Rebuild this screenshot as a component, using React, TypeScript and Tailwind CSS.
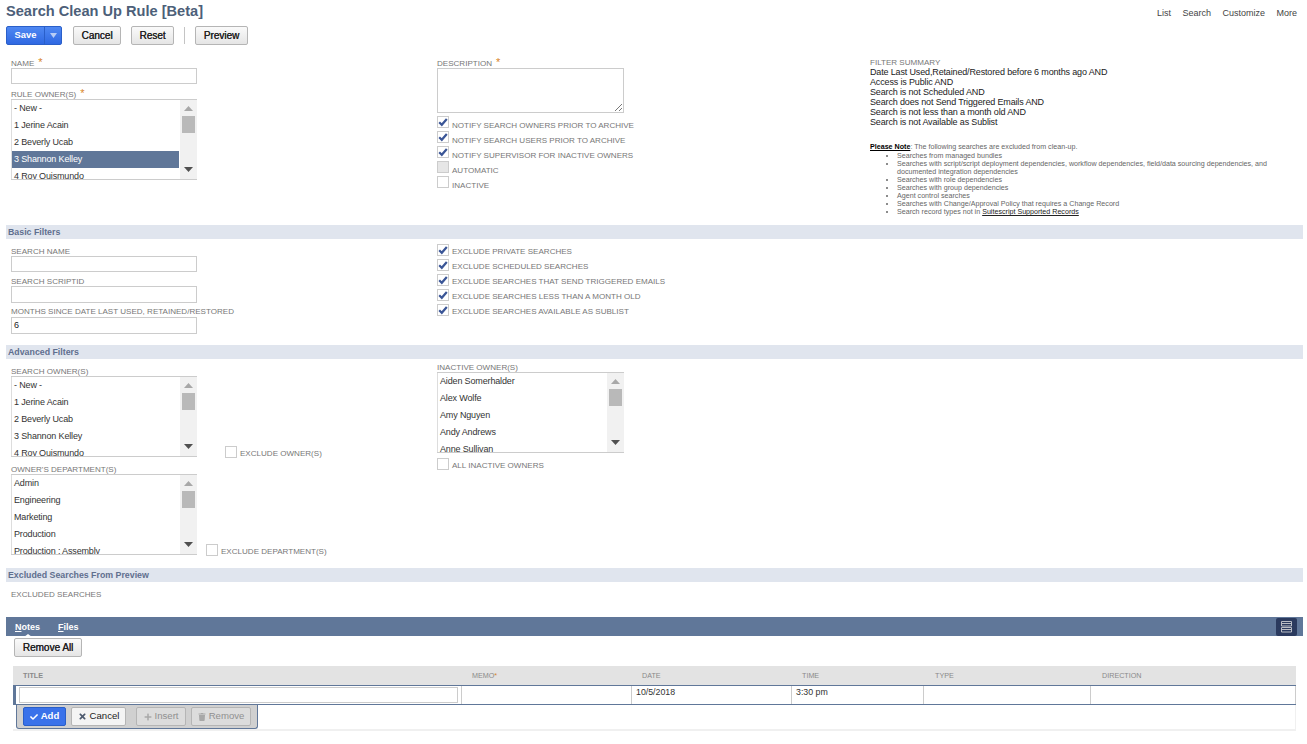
import { FaCheck, FaPlus, FaTimes, FaTrash } from "react-icons/fa";

const owners = ["- New -", "1 Jerine Acain", "2 Beverly Ucab", "3 Shannon Kelley", "4 Roy Quismundo"];
const inactiveOwners = ["Aiden Somerhalder", "Alex Wolfe", "Amy Nguyen", "Andy Andrews", "Anne Sullivan"];
const departments = ["Admin", "Engineering", "Marketing", "Production", "Production : Assembly"];

const summary = [
  "Date Last Used,Retained/Restored before 6 months ago AND",
  "Access is Public AND",
  "Search is not Scheduled AND",
  "Search does not Send Triggered Emails AND",
  "Search is not less than a month old AND",
  "Search is not Available as Sublist",
];

function Label({ text, required, high }: { text: string; required?: boolean; high?: boolean }) {
  return (
    <div className={`h-[10px] whitespace-nowrap text-[8.05px] text-[#777] ${high ? "leading-[10px]" : "leading-[12px]"}`}>
      {text}
      {required && <span className="ml-[4px] text-[11px] text-[#d9852b]">*</span>}
    </div>
  );
}

function TextInput({ value, className }: { value?: string; className: string }) {
  return (
    <div className={`w-[186px] border border-[#cccccc] bg-white px-[2px] text-[9px] leading-[14px] text-[#222] ${className}`}>
      {value}
    </div>
  );
}

function ListBox({ items, selected, width = "w-[186px]" }: { items: string[]; selected?: number; width?: string }) {
  return (
    <div className={`flex h-[81px] shrink-0 overflow-hidden border-y border-[#cccccc] bg-white ${width}`}>
      <div className="min-w-0 flex-1 border-l border-[#dddddd]">
        {items.map((item, i) => (
          <div
            key={item}
            className={`h-[17px] whitespace-nowrap pl-[2px] pr-1 text-[9px] leading-[16px] tracking-[-0.15px] ${
              i === selected ? "mr-[1px] bg-[#607799] text-white" : "text-[#333]"
            }`}
          >
            {item}
          </div>
        ))}
      </div>
      <div className="flex w-[17px] shrink-0 flex-col items-center bg-[#f1f1f1]">
        <svg width="9" height="5" viewBox="0 0 9 5" className="mt-[6px] shrink-0">
          <path d="M4.5 0 9 5H0z" fill="#a8a8a8" />
        </svg>
        <div className="mt-[5px] h-[17px] w-[13px] shrink-0 bg-[#b9b9b9]" />
        <svg width="9" height="5" viewBox="0 0 9 5" className="mt-[34px] shrink-0">
          <path d="M0 0h9L4.5 5z" fill="#505050" />
        </svg>
      </div>
    </div>
  );
}

function CheckRow({ label, checked, grey, tight }: { label: string; checked?: boolean; grey?: boolean; tight?: boolean }) {
  return (
    <div className="flex h-[15px] items-start">
      <div className={`flex h-[12px] w-[12px] shrink-0 items-center justify-center border border-[#cccccc] ${grey ? "bg-[#e6e6e6]" : "bg-white"}`}>
        {checked && (
          <svg width="10" height="9" viewBox="0 0 10 9">
            <path d="M1.2 4.2 3.8 6.8 8.8 1" fill="none" stroke="#3a5596" strokeWidth="2.2" />
          </svg>
        )}
      </div>
      <div className={`ml-[3px] h-[10px] whitespace-nowrap text-[8.05px] leading-[10px] text-[#777] ${tight ? "mt-[3px]" : "mt-[5px]"}`}>{label}</div>
    </div>
  );
}

function SectionBar({ title }: { title: string }) {
  return <div className="h-[14px] bg-[#e0e5ee] pl-[2px] text-[8.8px] font-bold leading-[14px] text-[#5f6f8e]">{title}</div>;
}

function GreyButton({ text, className }: { text: string; className: string }) {
  return (
    <div
      className={`flex h-[19px] items-center justify-center rounded-[2px] border border-[#b5b5b5] bg-gradient-to-b from-[#fafafa] to-[#e5e5e5] text-[10px] text-[#222] [text-shadow:0.3px_0_0_#222] ${className}`}
    >
      {text}
    </div>
  );
}

function BarButton({ icon, text, className }: { icon: React.ReactNode; text: string; className: string }) {
  return (
    <div className={`flex h-[19px] items-center justify-center gap-[3px] rounded-[2px] border text-[9.6px] ${className}`}>
      {icon}
      {text}
    </div>
  );
}

export default function App() {
  return (
    <div className="h-[744px] w-[1307px] overflow-hidden bg-white pl-[6px] pr-[4px] font-['Liberation_Sans',Arial,sans-serif]">
      {/* Title */}
      <div className="flex h-[26px] items-start justify-between">
        <h1 className="mt-[3px] text-[14.6px] font-bold leading-[17px] text-[#4d5f79]">Search Clean Up Rule [Beta]</h1>
        <div className="mr-[6px] mt-[8px] flex gap-[11.5px] text-[9px] leading-[10px] text-[#444]">
          <span>List</span>
          <span>Search</span>
          <span>Customize</span>
          <span>More</span>
        </div>
      </div>

      {/* Buttons */}
      <div className="flex h-[19px] items-center">
        <div className="flex h-[19px] w-[56px] overflow-hidden rounded-[2px] border border-[#2a5fc9] bg-gradient-to-b from-[#4f88f2] to-[#2f68e2] text-[9.4px] font-bold text-white">
          <div className="flex w-[38px] items-center justify-center border-r border-[#2a5fc9]">Save</div>
          <div className="flex flex-1 items-center justify-center">
            <svg width="7" height="5" viewBox="0 0 7 5">
              <path d="M0 0h7L3.5 5z" fill="#b8cdf5" />
            </svg>
          </div>
        </div>
        <GreyButton text="Cancel" className="ml-[11px] w-[48px]" />
        <GreyButton text="Reset" className="ml-[10px] w-[43px]" />
        <div className="ml-[10px] h-[17px] w-px bg-[#c4c4c4]" />
        <GreyButton text="Preview" className="ml-[10px] w-[53px]" />
      </div>

      {/* Main fields */}
      <div className="flex h-[180px] pl-[5px] pt-[12px]">
        <div className="w-[426px]">
          <Label text="NAME" required high />
          <TextInput className="mt-[1px] h-[16px]" />
          <div className="mb-[1px] mt-[4px]">
            <Label text="RULE OWNER(S)" required high />
          </div>
          <ListBox items={owners} selected={3} />
        </div>
        <div className="w-[433px]">
          <Label text="DESCRIPTION" required high />
          <div className="relative mt-[1px] h-[45px] w-[187px] border border-[#cccccc] bg-white">
            <svg width="9" height="9" viewBox="0 0 9 9" className="absolute bottom-0 right-0">
              <path d="M1 8 8 1M5 8 8 5" stroke="#555" strokeWidth="0.8" />
            </svg>
          </div>
          <div className="mt-[3px]">
            <CheckRow label="NOTIFY SEARCH OWNERS PRIOR TO ARCHIVE" checked />
            <CheckRow label="NOTIFY SEARCH USERS PRIOR TO ARCHIVE" checked />
            <CheckRow label="NOTIFY SUPERVISOR FOR INACTIVE OWNERS" checked />
            <CheckRow label="AUTOMATIC" grey />
            <CheckRow label="INACTIVE" />
          </div>
        </div>
        <div className="flex-1">
          <Label text="FILTER SUMMARY" />
          <div className="text-[9px] leading-[10px] tracking-[-0.15px] text-[#222]">
            {summary.map((line) => (
              <div key={line}>{line}</div>
            ))}
          </div>
          <div className="mt-[16px] text-[7.13px] leading-[8px] text-[#666]">
            <span className="font-bold text-black underline">Please Note</span>: The following searches are excluded from clean-up.
          </div>
          <ul className="mt-[1px] w-[405px] list-disc pl-[27px] text-[7.13px] leading-[8px] text-[#666]">
            <li>Searches from managed bundles</li>
            <li>Searches with script/script deployment dependencies, workflow dependencies, field/data sourcing dependencies, and documented integration dependencies</li>
            <li>Searches with role dependencies</li>
            <li>Searches with group dependencies</li>
            <li>Agent control searches</li>
            <li>Searches with Change/Approval Policy that requires a Change Record</li>
            <li>
              Search record types not in <span className="text-[#222] underline">Suitescript Supported Records</span>
            </li>
          </ul>
        </div>
      </div>

      <SectionBar title="Basic Filters" />

      {/* Basic filters */}
      <div className="flex h-[106px] pl-[5px]">
        <div className="w-[426px] pt-[7px]">
          <Label text="SEARCH NAME" />
          <TextInput className="h-[16px]" />
          <div className="mt-[4px]">
            <Label text="SEARCH SCRIPTID" />
          </div>
          <TextInput className="h-[17px]" />
          <div className="mt-[3px]">
            <Label text="MONTHS SINCE DATE LAST USED, RETAINED/RESTORED" />
          </div>
          <TextInput value="6" className="mt-[1px] h-[17px]" />
        </div>
        <div className="pt-[5px]">
          <CheckRow label="EXCLUDE PRIVATE SEARCHES" checked tight />
          <CheckRow label="EXCLUDE SCHEDULED SEARCHES" checked tight />
          <CheckRow label="EXCLUDE SEARCHES THAT SEND TRIGGERED EMAILS" checked tight />
          <CheckRow label="EXCLUDE SEARCHES LESS THAN A MONTH OLD" checked tight />
          <CheckRow label="EXCLUDE SEARCHES AVAILABLE AS SUBLIST" checked tight />
        </div>
      </div>

      <SectionBar title="Advanced Filters" />

      {/* Advanced filters */}
      <div className="flex h-[209px] pl-[5px]">
        <div className="w-[426px] pt-[7px]">
          <Label text="SEARCH OWNER(S)" />
          <div className="flex items-end">
            <ListBox items={owners} />
            <div className="-mb-[4px] ml-[28px]">
              <CheckRow label="EXCLUDE OWNER(S)" tight />
            </div>
          </div>
          <div className="mt-[7px]">
            <Label text="OWNER'S DEPARTMENT(S)" />
          </div>
          <div className="flex items-end">
            <ListBox items={departments} />
            <div className="-mb-[4px] ml-[9px]">
              <CheckRow label="EXCLUDE DEPARTMENT(S)" tight />
            </div>
          </div>
        </div>
        <div className="pt-[3px]">
          <Label text="INACTIVE OWNER(S)" />
          <ListBox items={inactiveOwners} width="w-[187px]" />
          <div className="mt-[5px]">
            <CheckRow label="ALL INACTIVE OWNERS" tight />
          </div>
        </div>
      </div>

      <SectionBar title="Excluded Searches From Preview" />

      <div className="h-[35px] pl-[5px] pt-[7px]">
        <Label text="EXCLUDED SEARCHES" />
      </div>

      {/* Tabs */}
      <div className="flex h-[19px] items-center justify-between bg-[#607799]">
        <div className="flex gap-[18px] pl-[9px] text-[9px] font-bold leading-[20px] text-white">
          <span className="relative">
            <span className="underline">N</span>otes
            <span className="absolute bottom-0 left-[9px] h-0 w-0 border-x-[4px] border-b-[3px] border-x-transparent border-b-white" />
          </span>
          <span>
            <span className="underline">F</span>iles
          </span>
        </div>
        <div className="mr-[6px] flex h-[18px] w-[21px] items-center justify-center rounded-[2px] bg-[#2b3a5e]">
          <svg width="11" height="12" viewBox="0 0 11 12">
            <path d="M.5.5h10v4.5H.5zM.5 6.5h10V11H.5z" fill="none" stroke="#b9bcc4" strokeWidth="1" />
            <path d="M0 2.5h11M0 8.5h11" stroke="#b9bcc4" strokeWidth="1" />
          </svg>
        </div>
      </div>

      <div className="h-[30px] pl-[8px] pt-[2px]">
        <GreyButton text="Remove All" className="w-[68px]" />
      </div>

      {/* Notes table */}
      <div className="ml-[7px] w-[1283px]">
        <div className="flex h-[19px] bg-[#e3e3e3] text-[7.2px] leading-[19px] text-[#8a8a8a]">
          <div className="w-[449px] pl-[10px] font-bold">TITLE</div>
          <div className="w-[170px] pl-[10px]">
            MEMO<span className="align-top text-[#d9852b]">*</span>
          </div>
          <div className="w-[160px] pl-[10px]">DATE</div>
          <div className="w-[132px] pl-[10px]">TIME</div>
          <div className="w-[167px] pl-[11px]">TYPE</div>
          <div className="flex-1 pl-[11px]">DIRECTION</div>
        </div>
        <div className="flex h-[20px] border-y border-l-[3px] border-[#607799] text-[8.8px] leading-[13px] text-[#333]">
          <div className="flex w-[446px] items-center border-r border-[#cccccc] pl-[3px]">
            <div className="h-[16px] w-[439px] border border-[#cccccc] bg-white" />
          </div>
          <div className="w-[170px] border-r border-[#cccccc]" />
          <div className="w-[160px] border-r border-[#cccccc] pl-[4px]">10/5/2018</div>
          <div className="w-[132px] border-r border-[#cccccc] pl-[4px]">3:30 pm</div>
          <div className="w-[167px] border-r border-[#cccccc]" />
          <div className="flex-1 border-r border-[#cccccc]" />
        </div>
        <div className="h-[26px] border-b-2 border-r border-[#f0f0f0]">
          <div className="ml-[3px] flex h-[24px] w-[242px] items-center rounded-b-[3px] border border-t-0 border-[#607799] bg-[#d0d0d0] pl-[6px]">
            <BarButton icon={<FaCheck size={8} />} text="Add" className="w-[43px] border-[#2a5fc9] bg-[#3a72ea] font-bold text-white" />
            <BarButton icon={<FaTimes size={9} color="#4d5a6e" />} text="Cancel" className="ml-[5px] w-[55px] border-[#b5b5b5] bg-[#f4f4f4] text-[#222]" />
            <BarButton icon={<FaPlus size={8} color="#a8a8a8" />} text="Insert" className="ml-[10px] w-[50px] border-[#b5b5b5] bg-[#dcdcdc] text-[#909090]" />
            <BarButton icon={<FaTrash size={8} color="#a8a8a8" />} text="Remove" className="ml-[5px] w-[60px] border-[#b5b5b5] bg-[#dcdcdc] text-[#909090]" />
          </div>
        </div>
      </div>
    </div>
  );
}
